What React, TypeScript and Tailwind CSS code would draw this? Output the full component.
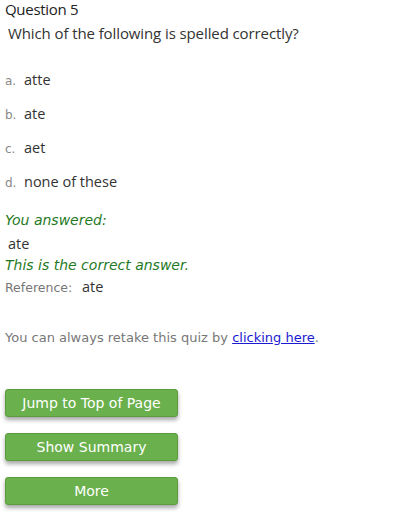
import React from "react";

const options = [
	{ letter: "a.", text: "atte" },
	{ letter: "b.", text: "ate" },
	{ letter: "c.", text: "aet" },
	{ letter: "d.", text: "none of these" },
];

const buttons = ["Jump to Top of Page", "Show Summary", "More"];

export default function App() {
	return (
		<div className="w-[414px] h-[512px] overflow-hidden bg-white text-[#333]">
			<div className="pl-[5px] pt-0">
				<div className="h-[18px] text-[15px] leading-[18px] text-[#222] [font-family:'Open_Sans',sans-serif] tracking-[-0.3px]">
					Question 5
				</div>
				<div className="mt-[5px] pl-[3px] h-[20px] text-[15px] leading-[20px] text-[#333] [font-family:'Open_Sans',sans-serif] tracking-[-0.1px]">
					Which of the following is spelled correctly?
				</div>
				<ul className="mt-[27px] flex flex-col gap-[14px]">
					{options.map((o) => (
						<li key={o.letter} className="flex items-baseline h-[20px]">
							<span className="w-[19px] text-[12px] text-[#888] [font-family:'DejaVu_Sans',sans-serif]">
								{o.letter}
							</span>
							<span className="text-[14.5px] leading-[20px] text-[#333] [font-family:'Open_Sans',sans-serif]">
								{o.text}
							</span>
						</li>
					))}
				</ul>
				<div className="mt-[19px] h-[18px] text-[14px] leading-[18px] italic text-[#1f7a1f] [font-family:'DejaVu_Sans',sans-serif]">
					You answered:
				</div>
				<div className="mt-[5px] pl-[3px] h-[20px] text-[14.5px] leading-[20px] text-[#333] [font-family:'Open_Sans',sans-serif]">
					ate
				</div>
				<div className="mt-[2px] h-[18px] text-[14px] leading-[18px] italic text-[#1f7a1f] [font-family:'DejaVu_Sans',sans-serif]">
					This is the correct answer.
				</div>
				<div className="mt-[2px] flex items-baseline h-[20px]">
					<span className="w-[77px] text-[12.5px] text-[#777] [font-family:'DejaVu_Sans',sans-serif]">
						Reference:
					</span>
					<span className="text-[14.5px] text-[#333] [font-family:'Open_Sans',sans-serif]">ate</span>
				</div>
				<p className="mt-[33px] text-[13px] leading-[18px] text-[#777] [font-family:'DejaVu_Sans',sans-serif]">
					You can always retake this quiz by{" "}
					<a href="#" className="text-[#1a1ad0] underline">
						clicking here
					</a>
					.
				</p>
				<div className="mt-[42px] flex flex-col gap-[16px]">
					{buttons.map((b) => (
						<button
							key={b}
							className="w-[173px] h-[28px] rounded-[3px] bg-[#6ab04c] border border-[#5a9c3e] text-white text-[14px] [font-family:'DejaVu_Sans',sans-serif] shadow-[0_3px_4px_rgba(0,0,0,0.35)]"
						>
							{b}
						</button>
					))}
				</div>
			</div>
		</div>
	);
}
